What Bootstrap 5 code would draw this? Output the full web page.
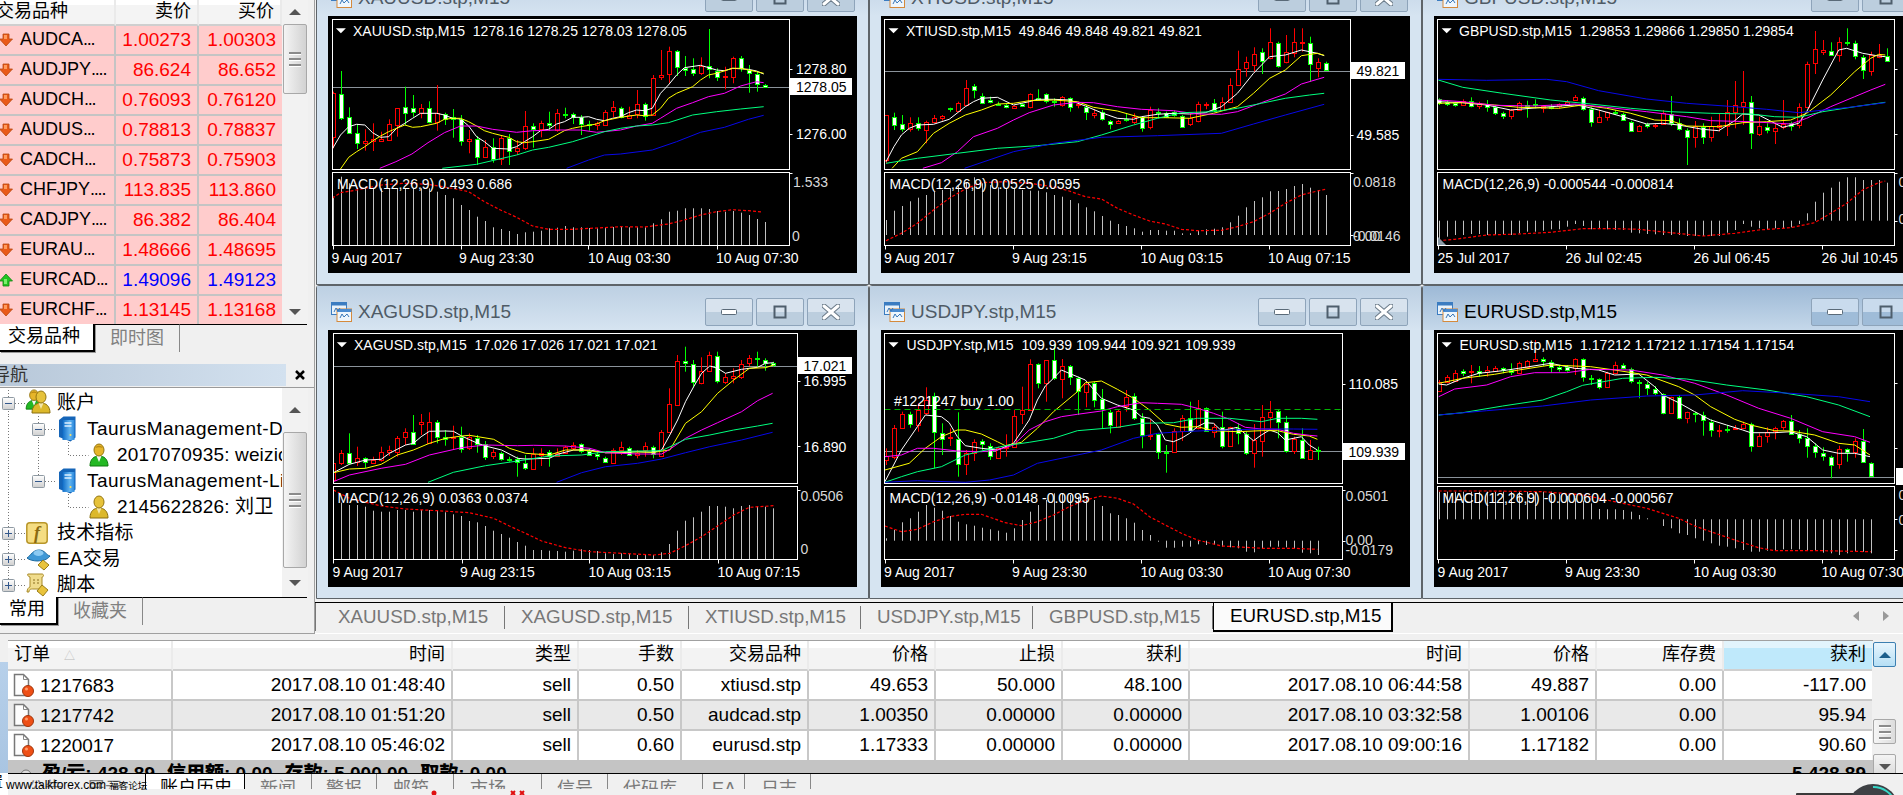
<!DOCTYPE html>
<html lang="zh">
<head>
<meta charset="utf-8">
<title>MetaTrader 4</title>
<link href="https://cdn.jsdelivr.net/npm/bootstrap@5.3.0/dist/css/bootstrap.min.css" rel="stylesheet">
<style>
html,body{margin:0;height:795px;overflow:hidden;background:#f0f0f0}
body{font-family:"Liberation Sans","Noto Sans CJK SC",sans-serif;font-size:19px;color:#000;line-height:1.2}
.shell{width:1903px;height:795px;overflow:hidden;position:relative}
.topzone{height:634px}
.leftcol{width:315px;height:634px;border-right:1px solid #a0a0a0;border-bottom:1px solid #a0a0a0;flex:none;overflow:hidden;background:#f0f0f0}
.rightcol{width:1588px;flex:none}
/* market watch */
.mw{height:324px;overflow:hidden;padding-right:7px}
.mw-tbl{width:282px;overflow:hidden;flex:none}
table.mwt{table-layout:fixed;width:282px;border-collapse:separate;border-spacing:0;margin:0}
.mwt th{height:26px;background:linear-gradient(#fff 0 20%,#f4f4f4 20% 100%);border-bottom:2px solid #cfcfcf;border-right:2px solid #eaeaea;font-weight:400;font-size:18px;text-align:right;padding:0 6px;white-space:nowrap;overflow:visible}
.mwt th:first-child{text-align:left;padding-left:0}
.mwt th:first-child span{margin-left:-4px;display:inline-block}
.mwt td{height:30px;background:#ffcccc;border-bottom:2px solid #c4c4c4;border-right:2px solid #c4c4c4;padding:0 6px 0 0;text-align:right;color:#f00;white-space:nowrap}
.mwt td.up{color:#00f}
.mwt td:first-child{text-align:left;color:#000;padding:0;font-size:18px}
.mwt td:last-child{border-right:0}
.mwt td svg{margin:0 7px 0 -1px;vertical-align:-2px}
.dts{letter-spacing:-1.2px}
/* scrollbars */
.vscroll{width:26px;flex:none;background:#f2f2f2;position:relative}
.sb-btn{height:24px}
.sb-thumb{width:24px;margin-left:1px;background:linear-gradient(90deg,#f4f4f4,#d2d2d2);border:1px solid #a8a8a8;border-radius:2px}
.tri{width:0;height:0;border-left:6px solid transparent;border-right:6px solid transparent}
.tri.u{border-bottom:6px solid #555}
.tri.d{border-top:6px solid #555}
.grip{width:12px;height:2px;background:#8b8b8b;box-shadow:0 1px 0 #fff}
/* tab rows on left */
.ltabs{height:37px;background:#f0f0f0}
.ltabs .lt{height:28px;font-size:18px;color:#808080;display:flex;align-items:center;border-top:1px solid #000}
.ltabs .lt.on{color:#000;background:#fff;border-top:0;border-right:2px solid #000;border-bottom:2px solid #000;box-shadow:1px 1px 0 #999}
.lt-fill{flex:1;border-top:1px solid #000;height:28px;margin-right:7px}
/* navigator */
.navhead{height:22px;margin-top:3px;margin-bottom:1px;display:flex;align-items:center}
.navhead .cap{width:286px;height:22px;background:linear-gradient(90deg,#b8c8d9,#d3e1ef);color:#333;font-size:18px;line-height:22px;overflow:hidden;white-space:nowrap}
.navhead .cap span{margin-left:-8px;display:inline-block}
.navbody{height:210px;padding-right:7px;border-top:1px solid #9a9a9a}
.treebox{width:282px;flex:none;background:#fff;overflow:hidden;padding-top:2px;height:209px}
.tr-row{height:26px;display:flex;align-items:center;white-space:nowrap;font-size:19px;letter-spacing:.15px}
.tr-row.tm{letter-spacing:.45px}
.tr-row svg{flex:none;overflow:visible}
/* mdi */
.mdi{height:602px;overflow:hidden;background:#f0f0f0;padding-left:1px}
.wins{display:grid;grid-template-columns:repeat(3,553px);grid-auto-rows:314px;margin-top:-29px;width:1659px}
.win{border:1px solid #5e6469;border-radius:3px 3px 0 0;background:#d6e4f1;padding:0 11px}
.win .wt{height:44px;background:linear-gradient(#bdd0e3,#d6e4f1);margin:0 -11px;padding:8px 13px 0 14px;display:flex;align-items:center;color:#4f5b66;font-size:19px;white-space:nowrap}
.win.act .wt{background:linear-gradient(#9db9d6,#c5d8ea);color:#000}
.wt .ttl{margin-left:6px}
.wb{width:48px;height:28px;border:1px solid #8ea4ba;border-radius:2px;background:linear-gradient(#d8e3ee 50%,#bccede 50%);display:flex;align-items:center;justify-content:center;margin-left:3px}
.win.act .wb{background:linear-gradient(#c9dbed 50%,#9fbcd8 50%)}
.cht{display:block;width:529px;height:257px;background:#000}
.cht text{font:14px "Liberation Sans",sans-serif;fill:#fff;white-space:pre}
.cht text.k{fill:#000}
.cht text.g{fill:#d8d8d8}
/* strip */
.strip{height:32px;background:#f0f0f0;border-top:1px solid #000;border-bottom:1px solid #fff;margin-top:0}
.st{height:28px;display:flex;align-items:center;color:#777;font-size:18.800px;white-space:nowrap;position:relative;padding-left:16px}
.st::after{content:"";position:absolute;right:0;top:3px;height:23px;border-right:1px solid #777}
.st.first{border-left:1px solid #777;padding-left:22px}
.st.on{background:#fbfbfb;color:#000;border-left:1px solid #000;border-right:2px solid #000;border-bottom:2px solid #000;height:29px}
.st.on::after{display:none}
.triL,.triR{width:0;height:0;border-top:5px solid transparent;border-bottom:5px solid transparent}
.triL{border-right:6px solid #999}
.triR{border-left:6px solid #999}
/* lower */
.lower{height:161px}
.leftedge{width:8px;flex:none;padding-top:28px;overflow:hidden}
.leftedge .blu{height:111px;background:linear-gradient(#b7d0ea,#a9c5e2)}
.leftedge .wh{height:22px;background:#fff;font-size:15px;white-space:nowrap;overflow:hidden}
.leftedge .wh span{margin-left:-12px;display:inline-block}
.orders{width:1865px;flex:none;padding-top:6px}
.ordwrap{height:139px}
.ordmain{width:1865px;flex:none;border-top:1px solid #a0a0a0}
table.ot{table-layout:fixed;width:1864px;border-collapse:separate;border-spacing:0;margin:0;background:#fff}
.ot th{height:30px;background:linear-gradient(#fff 0 25%,#f3f3f3 25% 100%);border-bottom:2px solid #d0d0d0;border-right:2px solid #ebebeb;font-size:18px;font-weight:400;text-align:right;padding:0 6px;white-space:nowrap}
.ot th.hl{background:linear-gradient(#e2f4fc 0 25%,#bfe9fb 25% 100%);border-right:0}
.ot th:first-child{text-align:left}
.ot td{height:30px;border-bottom:2px solid #c8c8c8;border-right:2px solid #c8c8c8;text-align:right;padding:0 6px;white-space:nowrap}
.ot tr:last-child td{border-bottom:0;height:29px}
.ot td:last-child{border-right:0}
.ot td:first-child{text-align:left;padding-left:5px}
.ot td svg{vertical-align:-5px;margin-right:6px}
.ot tr.alt td{background:#e9e9e9}
.sortm{color:#bbb;font-size:11px;margin-left:14px}
.sumbar{height:18px;background:#c4c4c4;overflow:hidden;font-weight:700;padding:3px 7px 0 12px;white-space:nowrap}
.sumbar svg{margin-right:10px;vertical-align:-3px;overflow:visible}
.sumbar b{margin-right:12px}
.osb{width:23px;flex:none;position:relative;padding-top:1px}
.osb .bup{height:25px;margin-top:1px;border:1px solid #3c7fb1;background:linear-gradient(#e8f5fd,#b6dff5);border-radius:2px}
.osb .bdn{height:25px;border:1px solid #a8a8a8;background:linear-gradient(#f4f4f4,#d8d8d8);border-radius:2px;margin-top:10px}
.osb .bth{height:25px;margin-top:52px;border:1px solid #a8a8a8;background:linear-gradient(90deg,#f6f6f6,#dcdcdc);border-radius:2px}
.btabs{height:16px;border-top:1px solid #000;overflow:hidden;margin-top:0;background:#f0f0f0;position:relative;margin-left:0;width:1895px}
.bt{font-size:18px;color:#7a7a7a;height:16px;padding-top:4px;line-height:22px;white-space:nowrap;position:relative;flex:none;overflow:hidden}
.bt.sepr{border-right:1px solid #888}
.bt.on{background:#fff;color:#000;border-left:1px solid #000;border-right:1px solid #000;margin-top:-1px;height:17px}
.wmark{position:absolute;left:6px;top:780px;font-size:12px;line-height:11px;color:#000;white-space:nowrap}
.wmark i{font-style:normal;font-size:9.500px}
.dial{position:absolute;left:1796px;top:782px}
</style>
</head>
<body>
<svg width="0" height="0" class="position-absolute">
<defs>
<linearGradient id="gsrv" x1="0" x2="1"><stop offset="0" stop-color="#0e6cc8"/><stop offset=".6" stop-color="#66b8f2"/><stop offset="1" stop-color="#2b8adf"/></linearGradient>
<linearGradient id="gexp" x1="0" y1="0" x2="0" y2="1"><stop offset="0" stop-color="#fff"/><stop offset="1" stop-color="#cfcfcf"/></linearGradient>
<symbol id="arD" viewBox="0 0 14 14"><path d="M4 1h6v5h3.500L7 13 .5 6H4z" fill="#ea5a18" stroke="#b8460f" stroke-width=".8"/><path d="M5 2h3v4H5z" fill="#ff9a5c"/></symbol>
<symbol id="arU" viewBox="0 0 14 14"><path d="M7 1l6.500 7H10v5H4V8H.5z" fill="#22c422" stroke="#128412" stroke-width=".8"/><path d="M5 6h3v5H5z" fill="#7bef6b"/></symbol>
<symbol id="wico" viewBox="0 0 21 20"><rect x=".5" y=".5" width="15" height="12" fill="#e8f2fb" stroke="#3b7cc1"/><rect x=".5" y=".5" width="15" height="3" fill="#3b7cc1"/><rect x="6" y="7" width="14.500" height="12.500" fill="#eef6fd" stroke="#d58a3c"/><rect x="6" y="7" width="14.500" height="3" fill="#4a8bd0"/><path d="M3 10l2-4 2 3 2-3M9 16l2-4 2 3 3-3 2 3" fill="none" stroke="#3877b8"/></symbol>
<symbol id="bmin" viewBox="0 0 18 10"><rect x="1.500" y="2.500" width="15" height="5" rx="1" fill="#fff" stroke="#5a6a78"/></symbol>
<symbol id="bmax" viewBox="0 0 14 14"><rect x="1.500" y="1.500" width="11" height="11" fill="none" stroke="#4e5e6c" stroke-width="2"/></symbol>
<symbol id="bcls" viewBox="0 0 18 16"><path d="M2 2l14 12M16 2L2 14" stroke="#6a7a88" stroke-width="5" stroke-linecap="round"/><path d="M2 2l14 12M16 2L2 14" stroke="#fff" stroke-width="3" stroke-linecap="round"/></symbol>
<symbol id="expM" viewBox="0 0 13 13"><rect x=".5" y=".5" width="12" height="12" rx="1" fill="url(#gexp)" stroke="#8f9aa3"/><path d="M3 6.500h7" stroke="#33588c"/></symbol>
<symbol id="expP" viewBox="0 0 13 13"><rect x=".5" y=".5" width="12" height="12" rx="1" fill="url(#gexp)" stroke="#8f9aa3"/><path d="M3 6.500h7M6.500 3v7" stroke="#33588c"/></symbol>
<symbol id="pG" viewBox="0 0 20 24" overflow="visible"><path d="M1 23c0-7 4-10 9-10s9 3 9 10z" fill="#23b823" stroke="#0e7a0e"/><path d="M7.500 13l2.500 6 2.500-6z" fill="#f4f4f4"/><ellipse cx="10" cy="7" rx="5" ry="6" fill="#e6b52a" stroke="#94750f"/><path d="M6 5c2-3 6-3 8 0-3-1-5-1-8 0z" fill="#b98a14"/></symbol>
<symbol id="pY" viewBox="0 0 20 24" overflow="visible"><path d="M1 23c0-7 4-10 9-10s9 3 9 10z" fill="#dcb82a" stroke="#8a6f10"/><path d="M7.500 13l2.500 6 2.500-6z" fill="#f3e6a8"/><ellipse cx="10" cy="7" rx="5" ry="6" fill="#e6c23a" stroke="#94750f"/></symbol>
<symbol id="srv" viewBox="0 0 18 26"><path d="M.5 4L5 .5h12v21L12 25.500.5 21z" fill="#1565b8"/><path d="M5 2h12v20H5z" fill="url(#gsrv)" transform="translate(-1 2)" opacity=".95"/><path d="M6 7h7M6 10h7" stroke="#dff1ff" stroke-width="1.500"/><circle cx="12" cy="19" r="1" fill="#ffe060"/></symbol>
<symbol id="fnb" viewBox="0 0 22 22"><rect x=".8" y=".8" width="20.400" height="20.400" rx="3" fill="#f5dd82" stroke="#b8962a" stroke-width="1.500"/><text x="11" y="17" font-family="Liberation Serif,serif" font-style="italic" font-weight="700" font-size="18" text-anchor="middle" fill="#8a6a10">f</text></symbol>
<symbol id="eab" viewBox="0 0 25 24"><path d="M1 11C5 8 7 3 13 3s7 5 11 6c-3 4-8 5-12 5S3 13 1 11z" fill="#3f98d6" stroke="#1e6a9e"/><ellipse cx="12.500" cy="6" rx="5" ry="3" fill="#8ccaf2"/><path d="M12 14h5l-1 3z" fill="#d8d8d8"/><path d="M17 13l6 5-5 5-6-5z" fill="#e9c33c" stroke="#9a7d18"/></symbol>
<symbol id="scr" viewBox="0 0 25 24"><path d="M2 1h14c2 0 2 3 0 3v12H7c-2 0-4 0-4 3H1c0-3 2-5 3-5V4C2 4 1 1 2 1z" fill="#f0dc8c" stroke="#a88a28"/><path d="M7 7h2M11 7h2M7 10h2M11 10h2" stroke="#8a6f20"/><path d="M16 12l6 5-5 6-6-5z" fill="#e9c33c" stroke="#9a7d18"/></symbol>
<symbol id="ordi" viewBox="0 0 21 24" overflow="visible"><path d="M1.500 1.500h9l5 5v16h-14z" fill="#fdfdfd" stroke="#777" stroke-width="1.500"/><path d="M10.500 1.500v5h5" fill="none" stroke="#888"/><circle cx="15" cy="18" r="5.500" fill="#ee4f16" stroke="#a0360c"/><circle cx="13.500" cy="16" r="1.500" fill="#ff9d6a"/></symbol>
</defs>
</svg>

<div class="shell d-flex flex-column">
<div class="d-flex topzone">
  <div class="leftcol d-flex flex-column">
    <div class="mw d-flex">
      <div class="mw-tbl">
        <table class="mwt">
          <colgroup><col style="width:116px"><col style="width:83px"><col style="width:83px"></colgroup>
          <thead><tr><th><span>交易品种</span></th><th>卖价</th><th>买价</th></tr></thead>
          <tbody>
          <tr><td><svg width="14" height="14"><use href="#arD"/></svg>AUDCA<span class="dts">...</span></td><td>1.00273</td><td>1.00303</td></tr>
          <tr><td><svg width="14" height="14"><use href="#arD"/></svg>AUDJPY<span class="dts">....</span></td><td>86.624</td><td>86.652</td></tr>
          <tr><td><svg width="14" height="14"><use href="#arD"/></svg>AUDCH<span class="dts">...</span></td><td>0.76093</td><td>0.76120</td></tr>
          <tr><td><svg width="14" height="14"><use href="#arD"/></svg>AUDUS<span class="dts">...</span></td><td>0.78813</td><td>0.78837</td></tr>
          <tr><td><svg width="14" height="14"><use href="#arD"/></svg>CADCH<span class="dts">...</span></td><td>0.75873</td><td>0.75903</td></tr>
          <tr><td><svg width="14" height="14"><use href="#arD"/></svg>CHFJPY<span class="dts">....</span></td><td>113.835</td><td>113.860</td></tr>
          <tr><td><svg width="14" height="14"><use href="#arD"/></svg>CADJPY<span class="dts">....</span></td><td>86.382</td><td>86.404</td></tr>
          <tr><td><svg width="14" height="14"><use href="#arD"/></svg>EURAU<span class="dts">...</span></td><td>1.48666</td><td>1.48695</td></tr>
          <tr><td><svg width="14" height="14"><use href="#arU"/></svg>EURCAD<span class="dts">...</span></td><td class="up">1.49096</td><td class="up">1.49123</td></tr>
          <tr><td><svg width="14" height="14"><use href="#arD"/></svg>EURCHF<span class="dts">...</span></td><td>1.13145</td><td>1.13168</td></tr>
          </tbody>
        </table>
      </div>
      <div class="vscroll d-flex flex-column">
        <div class="sb-btn d-flex align-items-center justify-content-center"><div class="tri u"></div></div>
        <div class="sb-thumb d-flex flex-column align-items-center justify-content-center gap-1" style="height:70px"><div class="grip"></div><div class="grip"></div><div class="grip"></div></div>
        <div class="flex-grow-1"></div>
        <div class="sb-btn d-flex align-items-center justify-content-center"><div class="tri d"></div></div>
      </div>
    </div>
    <div class="ltabs d-flex">
      <div class="lt on" style="width:95px;padding-left:8px">交易品种</div>
      <div class="lt" style="width:85px;padding-left:15px;border-right:1px solid #888">即时图</div>
      <div class="lt-fill"></div>
    </div>
    <div class="navhead"><div class="cap"><span>导航</span></div><div class="flex-grow-1 d-flex justify-content-center"><svg width="10" height="10" viewBox="0 0 10 10"><path d="M1 1l8 8M9 1l-8 8" stroke="#000" stroke-width="2.500"/></svg></div></div>
    <div class="navbody d-flex">
      <div class="treebox">
        <div class="tr-row"><svg width="57" height="26"><g fill="none" stroke="#777" stroke-dasharray="1 2"><path d="M8.500 0v26M15 13.500h10"/></g><use href="#expM" x="2" y="7" width="13" height="13"/><use href="#pG" x="25" y="-1" width="18" height="21"/><use href="#pY" x="31" y="0" width="20" height="24"/></svg>账户</div>
        <div class="tr-row tm"><svg width="87" height="26"><g fill="none" stroke="#777" stroke-dasharray="1 2"><path d="M8.500 0v26M38.500 0v26M45 13.500h11"/></g><use href="#expM" x="32" y="7" width="13" height="13"/><use href="#srv" x="58" y="0" width="19" height="26"/></svg>TaurusManagement-D</div>
        <div class="tr-row"><svg width="117" height="26"><g fill="none" stroke="#777" stroke-dasharray="1 2"><path d="M8.500 0v26M38.500 0v26M68.500 0v13.500h20"/></g><use href="#pG" x="89" y="1" width="20" height="24"/></svg>2017070935: weizic</div>
        <div class="tr-row tm"><svg width="87" height="26"><g fill="none" stroke="#777" stroke-dasharray="1 2"><path d="M8.500 0v26M38.500 0v13M45 13.500h11"/></g><use href="#expM" x="32" y="7" width="13" height="13"/><use href="#srv" x="58" y="0" width="19" height="26"/></svg>TaurusManagement-Li</div>
        <div class="tr-row"><svg width="117" height="26"><g fill="none" stroke="#777" stroke-dasharray="1 2"><path d="M8.500 0v26M68.500 0v13.500h20"/></g><use href="#pY" x="89" y="1" width="20" height="24"/></svg>2145622826: 刘卫</div>
        <div class="tr-row"><svg width="57" height="26"><g fill="none" stroke="#777" stroke-dasharray="1 2"><path d="M8.500 0v26M15 13.500h10"/></g><use href="#expP" x="2" y="7" width="13" height="13"/><use href="#fnb" x="26" y="2" width="22" height="22"/></svg>技术指标</div>
        <div class="tr-row"><svg width="57" height="26"><g fill="none" stroke="#777" stroke-dasharray="1 2"><path d="M8.500 0v26M15 13.500h10"/></g><use href="#expP" x="2" y="7" width="13" height="13"/><use href="#eab" x="26" y="1" width="25" height="24"/></svg>EA交易</div>
        <div class="tr-row"><svg width="57" height="26"><g fill="none" stroke="#777" stroke-dasharray="1 2"><path d="M8.500 0v13M15 13.500h10"/></g><use href="#expP" x="2" y="7" width="13" height="13"/><use href="#scr" x="26" y="1" width="25" height="24"/></svg>脚本</div>
      </div>
      <div class="vscroll d-flex flex-column">
        <div class="sb-btn d-flex align-items-center justify-content-center" style="height:44px"><div class="tri u"></div></div>
        <div class="sb-thumb d-flex flex-column align-items-center justify-content-center gap-1" style="height:136px"><div class="grip"></div><div class="grip"></div><div class="grip"></div></div>
        <div class="flex-grow-1 d-flex align-items-center justify-content-center"><div class="tri d"></div></div>
      </div>
    </div>
    <div class="ltabs d-flex" style="height:32px">
      <div class="lt on" style="width:58px;padding-left:9px">常用</div>
      <div class="lt" style="width:85px;padding-left:15px;border-right:1px solid #888">收藏夹</div>
      <div class="lt-fill"></div>
    </div>
  </div>

  <div class="rightcol">
    <div class="mdi">
      <div class="wins">
        <div class="win"><div class="wt"><svg width="21" height="20"><use href="#wico"/></svg><span class="ttl">XAUUSD.stp,M15</span><span class="ms-auto"></span><span class="wb"><svg width="18" height="10"><use href="#bmin"/></svg></span><span class="wb"><svg width="14" height="14"><use href="#bmax"/></svg></span><span class="wb"><svg width="18" height="16"><use href="#bcls"/></svg></span></div>
          <svg class="cht" id="c1"><g class="mk"></g>
            <text x="25" y="20">XAUUSD.stp,M15  1278.16 1278.25 1278.03 1278.05</text>
            <text x="468" y="58">1278.80</text><text x="468" y="123">1276.00</text>
            <rect x="462" y="62" width="62" height="17" fill="#fff"/><text class="k" x="468" y="75.500">1278.05</text>
            <text class="g" x="465" y="170.500">1.533</text><text class="g" x="464" y="224.500">0</text>
            <text x="9" y="173">MACD(12,26,9) 0.493 0.686</text>
            <text x="3.500" y="246.500">9 Aug 2017</text><text x="131" y="246.500">9 Aug 23:30</text><text x="260" y="246.500">10 Aug 03:30</text><text x="388" y="246.500">10 Aug 07:30</text>
          </svg></div>
        <div class="win"><div class="wt"><svg width="21" height="20"><use href="#wico"/></svg><span class="ttl">XTIUSD.stp,M15</span><span class="ms-auto"></span><span class="wb"><svg width="18" height="10"><use href="#bmin"/></svg></span><span class="wb"><svg width="14" height="14"><use href="#bmax"/></svg></span><span class="wb"><svg width="18" height="16"><use href="#bcls"/></svg></span></div>
          <svg class="cht" id="c2"><g class="mk"></g>
            <text x="25" y="20">XTIUSD.stp,M15  49.846 49.848 49.821 49.821</text>
            <rect x="470" y="46" width="54" height="17" fill="#fff"/><text class="k" x="475.500" y="59.500">49.821</text>
            <text x="475.500" y="123.500">49.585</text>
            <text class="g" x="472" y="170.500">0.0818</text><text class="g" x="472" y="224.500">0.00</text><text class="g" x="472" y="224.500">-0.0146</text>
            <text x="8.500" y="173">MACD(12,26,9) 0.0525 0.0595</text>
            <text x="3" y="246.500">9 Aug 2017</text><text x="131" y="246.500">9 Aug 23:15</text><text x="259.500" y="246.500">10 Aug 03:15</text><text x="387" y="246.500">10 Aug 07:15</text>
          </svg></div>
        <div class="win"><div class="wt"><svg width="21" height="20"><use href="#wico"/></svg><span class="ttl">GBPUSD.stp,M15</span><span class="ms-auto"></span><span class="wb"><svg width="18" height="10"><use href="#bmin"/></svg></span><span class="wb"><svg width="14" height="14"><use href="#bmax"/></svg></span><span class="wb"><svg width="18" height="16"><use href="#bcls"/></svg></span></div>
          <svg class="cht" id="c3"><g class="mk"></g>
            <text x="25" y="20">GBPUSD.stp,M15  1.29853 1.29866 1.29850 1.29854</text>
            <text class="g" x="464.500" y="170.500">0</text><text class="g" x="464.500" y="208">0</text>
            <text x="8.500" y="173">MACD(12,26,9) -0.000544 -0.000814</text>
            <text x="3.500" y="246.500">25 Jul 2017</text><text x="131.500" y="246.500">26 Jul 02:45</text><text x="259.500" y="246.500">26 Jul 06:45</text><text x="387.500" y="246.500">26 Jul 10:45</text>
          </svg></div>
        <div class="win"><div class="wt"><svg width="21" height="20"><use href="#wico"/></svg><span class="ttl">XAGUSD.stp,M15</span><span class="ms-auto"></span><span class="wb"><svg width="18" height="10"><use href="#bmin"/></svg></span><span class="wb"><svg width="14" height="14"><use href="#bmax"/></svg></span><span class="wb"><svg width="18" height="16"><use href="#bcls"/></svg></span></div>
          <svg class="cht" id="c4"><g class="mk"></g>
            <text x="26" y="19.500">XAGUSD.stp,M15  17.026 17.026 17.021 17.021</text>
            <rect x="469.500" y="27" width="54.500" height="17" fill="#fff"/><text class="k" x="475.500" y="40.500">17.021</text>
            <text x="475.500" y="56">16.995</text><text x="475.500" y="121.500">16.890</text>
            <text class="g" x="472.500" y="170.500">0.0506</text><text class="g" x="472.500" y="224">0</text>
            <text x="9.500" y="172.500">MACD(12,26,9) 0.0363 0.0374</text>
            <text x="4.500" y="246.500">9 Aug 2017</text><text x="132" y="246.500">9 Aug 23:15</text><text x="260.500" y="246.500">10 Aug 03:15</text><text x="389.500" y="246.500">10 Aug 07:15</text>
          </svg></div>
        <div class="win"><div class="wt"><svg width="21" height="20"><use href="#wico"/></svg><span class="ttl">USDJPY.stp,M15</span><span class="ms-auto"></span><span class="wb"><svg width="18" height="10"><use href="#bmin"/></svg></span><span class="wb"><svg width="14" height="14"><use href="#bmax"/></svg></span><span class="wb"><svg width="18" height="16"><use href="#bcls"/></svg></span></div>
          <svg class="cht" id="c5"><g class="mk"></g>
            <text x="25.500" y="19.500">USDJPY.stp,M15  109.939 109.944 109.921 109.939</text>
            <text x="13" y="76">#1221247 buy 1.00</text>
            <text x="467.500" y="59">110.085</text>
            <rect x="462" y="113" width="62" height="17" fill="#fff"/><text class="k" x="467.500" y="126.500">109.939</text>
            <text class="g" x="464.500" y="170.500">0.0501</text><text class="g" x="464.500" y="215">0.00</text><text class="g" x="464.500" y="224.500">-0.0179</text>
            <text x="8.500" y="172.500">MACD(12,26,9) -0.0148 -0.0095</text>
            <text x="3" y="246.500">9 Aug 2017</text><text x="131" y="246.500">9 Aug 23:30</text><text x="259.500" y="246.500">10 Aug 03:30</text><text x="387" y="246.500">10 Aug 07:30</text>
          </svg></div>
        <div class="win act"><div class="wt"><svg width="21" height="20"><use href="#wico"/></svg><span class="ttl">EURUSD.stp,M15</span><span class="ms-auto"></span><span class="wb"><svg width="18" height="10"><use href="#bmin"/></svg></span><span class="wb"><svg width="14" height="14"><use href="#bmax"/></svg></span><span class="wb"><svg width="18" height="16"><use href="#bcls"/></svg></span></div>
          <svg class="cht" id="c6"><g class="mk"></g>
            <text x="25.500" y="19.500">EURUSD.stp,M15  1.17212 1.17212 1.17154 1.17154</text>
            <rect x="462" y="138" width="62" height="17" fill="#fff"/>
            <text class="g" x="464.500" y="170">0</text><text class="g" x="464.500" y="194.500">0</text>
            <text x="8.500" y="172.500">MACD(12,26,9) -0.000604 -0.000567</text>
            <text x="3.500" y="246.500">9 Aug 2017</text><text x="131" y="246.500">9 Aug 23:30</text><text x="259.500" y="246.500">10 Aug 03:30</text><text x="387.500" y="246.500">10 Aug 07:30</text>
          </svg></div>
      </div>
    </div>
    <div class="strip d-flex">
      <div class="st first" style="width:190px">XAUUSD.stp,M15</div>
      <div class="st" style="width:184px">XAGUSD.stp,M15</div>
      <div class="st" style="width:172px">XTIUSD.stp,M15</div>
      <div class="st" style="width:172px">USDJPY.stp,M15</div>
      <div class="st" style="width:180px">GBPUSD.stp,M15</div>
      <div class="st on" style="width:180px">EURUSD.stp,M15</div>
      <div class="d-flex align-items-center gap-4 ms-auto" style="height:26px;padding-right:14px"><div class="triL"></div><div class="triR"></div></div>
    </div>
  </div>
</div>

<div class="lower d-flex">
  <div class="leftedge"><div class="blu"></div><div class="wh"><span>置</span></div></div>
  <div class="d-flex flex-column">
    <div class="orders d-flex ordwrap" style="height:139px;width:1888px">
      <div class="ordmain">
        <table class="ot">
          <colgroup><col style="width:165px"><col style="width:280px"><col style="width:126px"><col style="width:103px"><col style="width:127px"><col style="width:127px"><col style="width:127px"><col style="width:127px"><col style="width:280px"><col style="width:127px"><col style="width:127px"><col style="width:148px"></colgroup>
          <thead><tr><th>订单<span class="sortm">△</span></th><th>时间</th><th>类型</th><th>手数</th><th>交易品种</th><th>价格</th><th>止损</th><th>获利</th><th>时间</th><th>价格</th><th>库存费</th><th class="hl">获利</th></tr></thead>
          <tbody>
            <tr><td><svg width="21" height="24"><use href="#ordi"/></svg>1217683</td><td>2017.08.10 01:48:40</td><td>sell</td><td>0.50</td><td>xtiusd.stp</td><td>49.653</td><td>50.000</td><td>48.100</td><td>2017.08.10 06:44:58</td><td>49.887</td><td>0.00</td><td>-117.00</td></tr>
            <tr class="alt"><td><svg width="21" height="24"><use href="#ordi"/></svg>1217742</td><td>2017.08.10 01:51:20</td><td>sell</td><td>0.50</td><td>audcad.stp</td><td>1.00350</td><td>0.00000</td><td>0.00000</td><td>2017.08.10 03:32:58</td><td>1.00106</td><td>0.00</td><td>95.94</td></tr>
            <tr><td><svg width="21" height="24"><use href="#ordi"/></svg>1220017</td><td>2017.08.10 05:46:02</td><td>sell</td><td>0.60</td><td>eurusd.stp</td><td>1.17333</td><td>0.00000</td><td>0.00000</td><td>2017.08.10 09:00:16</td><td>1.17182</td><td>0.00</td><td>90.60</td></tr>
          </tbody>
        </table>
        <div class="sumbar d-flex"><svg width="12" height="16" viewBox="0 0 12 16"><circle cx="6" cy="12" r="5" fill="#dcdcdc" stroke="#777"/></svg><b>盈/亏: 428.89</b><b>信用额: 0.00</b><b>存款: 5,000.00</b><b>取款: 0.00</b><span class="ms-auto">5,428.89</span></div>
      </div>
      <div class="osb">
        <div class="bup d-flex align-items-center justify-content-center"><div class="tri u" style="border-bottom-color:#1d5f8c"></div></div>
        <div class="bth d-flex flex-column align-items-center justify-content-center gap-1"><div class="grip"></div><div class="grip"></div><div class="grip"></div></div>
        <div class="bdn d-flex align-items-center justify-content-center"><div class="tri d"></div></div>
      </div>
    </div>
    <div class="btabs d-flex">
      <div class="bt" style="width:137px;padding-left:19px">公告<span class="ms-4">展示</span></div>
      <div class="bt on" style="width:100px;padding-left:14px">账户历史</div>
      <div class="bt sepr" style="width:67px;padding-left:15px">新闻</div>
      <div class="bt sepr" style="width:65px;padding-left:14px">警报</div>
      <div class="bt sepr" style="width:77px;padding-left:16px">邮箱</div>
      <div class="bt sepr" style="width:88px;padding-left:16px">市场</div>
      <div class="bt sepr" style="width:66px;padding-left:15px">信号</div>
      <div class="bt sepr" style="width:95px;padding-left:15px">代码库</div>
      <div class="bt sepr" style="width:42px;padding-left:9px">EA</div>
      <div class="bt sepr" style="width:66px;padding-left:16px">日志</div>
    </div>
  </div>
</div>

<div class="wmark">www.talkforex.com <i>福客论坛</i></div>
<svg class="position-absolute" style="left:431px;top:790px" width="100" height="5"><circle cx="3" cy="3" r="2.500" fill="#e01010"/><path d="M80 1l4 4M84 1l-4 4M89 1l4 4M93 1l-4 4" stroke="#e01010" stroke-width="2"/></svg>
<svg class="dial" width="107" height="13"><rect x="0" y="11" width="80" height="3" rx="1" fill="#3a3a3a"/><circle cx="77" cy="28" r="26" fill="#3e4044"/><path d="M77 5a23 23 0 0 1 22 15" fill="none" stroke="#38d8c8" stroke-width="2"/></svg>
</div>

<script>
function chart(o){
  var X=function(z){return (z-o.zx0)/o.sx},Y=function(z){return (z-o.zy0)/3},n=function(v){return v.toFixed(1)};
  var h=[],F=o.frame;
  var cid=o.id+'cp',mid=o.id+'mp';
  var fl=Math.round(X(F[0]))+.5,fr=Math.round(X(F[1]))+.5,ft=Math.round(Y(F[2]))+.5,fb=Math.round(Y(F[3]))+.5,mt=Math.round(Y(F[4]))+.5,mb=Math.round(Y(F[5]))+.5;
  h.push('<defs><clipPath id="'+cid+'"><rect x="'+fl+'" y="'+ft+'" width="'+(fr-fl)+'" height="'+(fb-ft)+'"/></clipPath><clipPath id="'+mid+'"><rect x="'+fl+'" y="'+mt+'" width="'+(fr-fl)+'" height="'+(mb-mt)+'"/></clipPath></defs>');
  var cx=function(i){return Math.round(X(o.x0+i*o.pitch))+.5};
  h.push('<g clip-path="url(#'+cid+')">');
  if(o.price)h.push('<path d="M'+fl+' '+(Math.round(Y(o.price))+.5)+'H'+fr+'" stroke="#8a929a"/>');
  o.c.trim().split(/\s+/).forEach(function(s,i){
    var g=s[0]=='g',a=s.slice(1).split(',').map(Number),x=cx(i),col=g?'#0f0':'#f00';
    var t=Math.round(Y(a[1]))+.5,b=Math.round(Y(a[2]))+.5;
    h.push('<path d="M'+x+' '+n(Y(a[0]))+'V'+n(Y(a[3]))+'" stroke="'+col+'"/>');
    h.push('<rect x="'+(x-2)+'" y="'+t+'" width="4" height="'+Math.max(b-t,1)+'" fill="'+(g?'#fff':'#000')+'" stroke="'+col+'"/>');
  });
  [['w','#fff'],['y','#ff0'],['m','#f0f'],['s','#00ff7f'],['b','#0808e8']].forEach(function(l){
    var pts=o[l[0]].trim().split(/\s+/).map(function(p){var a=p.split(',');return n(X(+a[0]))+','+n(Y(+a[1]))}).join(' ');
    h.push('<polyline points="'+pts+'" fill="none" stroke="'+l[1]+'"/>');
  });
  if(o.order)h.push('<path d="M'+fl+' '+(Math.round(Y(o.order))+.5)+'H'+fr+'" stroke="#00b400" stroke-dasharray="6 4"/>');
  h.push('</g><g clip-path="url(#'+mid+')">');
  o.bars.forEach(function(v,i){var x=cx(i);h.push('<path d="M'+x+' '+n(Y(o.zero))+'V'+n(Y(v))+'" stroke="#c0c0c0"/>')});
  var sp=o.sig.trim().split(/\s+/).map(function(p){var a=p.split(',');return n(X(+a[0]))+','+n(Y(+a[1]))}).join(' ');
  h.push('<polyline points="'+sp+'" fill="none" stroke="#f00" stroke-width="1.2" stroke-dasharray="3 2"/>');
  if(o.tri)h.push('<polygon points="'+fl+','+n(mb-9)+' '+(fl+9)+','+mb+' '+fl+','+mb+'" fill="#8a9aa6"/>');
  h.push('</g>');
  h.push('<rect x="'+fl+'" y="'+ft+'" width="'+(fr-fl)+'" height="'+(fb-ft)+'" fill="none" stroke="#fff"/>');
  h.push('<rect x="'+fl+'" y="'+mt+'" width="'+(fr-fl)+'" height="'+(mb-mt)+'" fill="none" stroke="#fff"/>');
  o.dt.forEach(function(z){var x=Math.round(X(z))+.5;h.push('<path d="M'+x+' '+mb+'v4" stroke="#fff"/>')});
  o.rt.forEach(function(z){var y=Math.round(Y(z))+.5;h.push('<path d="M'+fr+' '+y+'h3" stroke="#fff"/>')});
  h.push('<polygon points="'+n(X(o.tx))+','+n(Y(o.zy0+37))+' '+n(X(o.tx)+10)+','+n(Y(o.zy0+37))+' '+n(X(o.tx)+5)+','+n(Y(o.zy0+52))+'" fill="#fff"/>');
  document.querySelector('#'+o.id+' .mk').innerHTML=h.join('');
}
chart({id:'c1',zx0:50,sx:2.8,zy0:48,x0:63,pitch:22.4,tx:72,price:260,frame:[60,1340,58,508,515,735],zero:735,dt:[63,421,779,1138],rt:[208,403,518],
c:"r275,280,410,445 g213,283,353,360 g322,352,398,402 g372,398,428,447 r388,422,428,452 r370,418,424,453 r395,418,424,424 r358,373,420,422 r325,325,375,410 g260,322,340,375 g285,323,337,350 r312,325,338,355 g304,325,367,370 r255,340,365,392 g338,343,358,375 g327,352,358,413 g345,358,423,437 r390,418,424,460 g408,418,472,495 r420,440,472,472 g415,440,478,488 r405,415,478,495 g402,415,452,495 r420,445,452,465 r333,377,445,450 g370,377,388,443 r362,370,388,412 g335,368,376,392 r327,340,390,395 g323,341,343,355 g338,343,350,372 g345,350,372,405 g362,372,375,392 r365,370,375,390 r330,335,375,378 r303,320,333,352 g320,323,352,355 r320,345,355,357 r270,313,342,355 g308,311,348,362 r225,233,345,348 r150,224,232,240 r140,153,222,250 g150,152,202,228 g168,203,210,228 g175,208,218,228 r172,197,218,225 g87,197,208,235 g205,212,230,243 r200,228,230,268 r170,175,232,250 g168,175,203,215 g195,210,220,278 g215,222,253,275 g252,254,260,262",
w:"62,447 85,405 108,380 130,373 153,375 175,398 197,412 220,410 242,385 265,370 287,355 309,340 354,340 376,345 399,355 421,357 444,378 466,410 488,425 511,445 556,447 578,440 600,425 623,410 645,392 668,388 690,372 712,365 735,352 757,352 780,350 802,358 824,362 847,355 869,350 891,338 914,330 936,332 958,325 981,280 1003,255 1026,225 1048,203 1093,196 1138,210 1160,212 1183,205 1227,208 1250,213 1270,222",
y:"85,507 108,472 130,455 153,440 175,423 197,408 220,395 242,385 265,375 287,382 309,380 354,370 376,358 399,355 421,355 444,365 466,378 488,392 511,400 556,412 578,425 600,428 623,425 668,418 690,405 712,392 735,385 757,380 802,372 824,362 869,352 914,345 936,347 958,345 981,325 1003,295 1026,280 1071,260 1093,240 1115,225 1138,220 1183,205 1205,205 1250,215 1270,220",
m:"195,505 240,485 285,462 330,428 376,398 421,378 466,378 511,388 578,397 623,392 690,390 757,390 802,397 869,390 914,378 958,370 981,355 1026,325 1071,308 1115,290 1160,280 1205,258 1250,245 1270,248",
s:"370,505 466,493 578,465 623,450 668,442 735,425 780,410 824,395 869,385 914,378 958,375 1003,368 1071,345 1138,335 1205,327 1270,320",
b:"718,505 780,480 824,465 869,462 958,450 1026,425 1093,397 1160,382 1227,358 1270,346",
bars:[590,530,550,565,560,565,565,565,565,565,565,565,565,575,585,595,615,630,650,663,682,687,693,702,697,695,692,685,683,678,682,682,684,685,683,681,680,682,682,682,670,658,635,632,625,625,625,627,633,635,633,638,645,657,666],
sig:"62,595 85,578 130,570 200,555 265,550 330,553 399,565 444,575 488,605 533,630 578,652 623,678 668,688 735,688 802,684 869,680 936,681 1003,672 1048,660 1093,645 1138,635 1183,629 1227,632 1265,636"});

chart({id:'c2',zx0:31,sx:2.8,zy0:48,x0:45,pitch:22.4,tx:52,price:212,frame:[40,1343,58,508,515,735],zero:705,dt:[43,401,760,1118],rt:[405,518,705],
c:"r345,345,480,490 g338,350,375,390 g345,373,388,395 r352,368,388,395 g352,368,385,392 r362,365,390,430 r345,355,367,370 r345,349,355,362 g323,325,327,335 r305,310,332,335 r240,263,315,317 g252,257,270,295 g280,287,310,312 g290,300,307,310 g305,311,316,318 g310,315,320,325 r316,318,323,324 g310,313,317,320 r280,281,320,325 g268,295,297,300 g280,282,302,310 g295,303,307,320 r288,290,316,320 g292,295,320,335 r305,312,316,325 g315,322,337,360 r328,338,346,355 g330,335,358,362 g360,362,373,388 r360,362,370,372 g340,358,360,365 r340,352,366,372 g350,352,385,395 r320,330,382,388 g325,335,337,355 g335,340,352,354 g332,335,346,350 g345,347,380,382 r342,355,373,378 r305,313,363,367 r307,312,316,328 g297,308,330,335 r292,305,330,330 r235,255,305,305 r152,208,255,257 r170,187,205,230 r142,163,195,215 g145,157,182,222 r85,127,175,178 g125,130,197,203 r105,157,185,190 r85,127,158,172 r85,125,130,155 g110,130,193,245 r175,185,203,232 g185,190,210,212",
w:"45,485 67,440 88,405 110,385 133,375 178,373 222,358 267,320 290,305 312,295 357,292 402,315 446,305 469,298 514,298 558,300 603,318 648,338 693,355 738,358 760,350 805,343 850,340 895,342 939,338 984,320 1029,280 1074,220 1119,170 1163,165 1208,150 1253,160 1272,167",
y:"62,505 88,475 133,455 178,400 222,370 267,345 312,330 357,312 402,310 446,302 514,300 581,305 626,322 693,333 760,353 827,353 895,355 962,340 1029,320 1074,280 1119,235 1163,210 1208,167 1253,160 1272,166",
m:"148,505 200,488 245,455 290,410 357,385 402,360 446,338 514,315 581,307 626,308 693,320 760,328 850,332 917,342 984,343 1029,335 1096,308 1163,282 1208,252 1272,232",
s:"45,490 133,475 245,460 357,445 469,437 581,425 648,405 738,375 805,355 872,338 962,335 1029,325 1096,310 1163,295 1231,285 1272,280",
b:"265,505 402,455 514,430 648,412 805,407 984,400 1074,372 1163,345 1272,313",
bars:[660,632,618,604,593,585,575,570,565,558,548,532,550,555,562,565,565,570,572,572,577,585,590,600,610,622,634,648,662,672,678,685,695,690,690,692,692,700,700,692,688,686,682,667,647,622,603,592,574,573,567,558,552,563,570,585],
sig:"45,722 88,700 133,670 178,630 222,595 267,567 312,548 379,545 446,550 514,560 558,573 603,590 648,597 693,625 738,645 783,663 827,672 872,688 917,692 984,691 1029,680 1074,665 1119,640 1163,610 1208,585 1253,573 1275,568"});

chart({id:'c3',zx0:42,sx:3,zy0:48,x0:56,pitch:24,tx:65,frame:[52,1423,58,508,515,735],zero:662,tri:1,dt:[55,439,823,1207],rt:[208,403,518,662],
c:"g295,298,310,315 g300,305,312,318 g305,308,316,320 r298,302,316,318 g292,302,318,322 r305,310,318,327 g300,313,320,335 g318,322,340,345 g335,340,347,357 r328,331,347,358 r305,310,330,333 g302,314,316,353 g298,313,315,325 r315,318,323,338 g312,320,322,328 r310,313,318,325 r300,305,315,318 r285,292,300,303 g290,293,328,332 g322,328,365,380 r330,350,365,365 r335,337,350,362 g330,335,340,345 g338,342,360,362 g362,365,392,392 r375,377,392,395 g368,372,378,385 r370,374,375,385 r330,340,373,375 g288,342,368,378 g355,370,387,392 g385,390,412,495 r363,378,412,443 g370,380,412,432 r350,378,412,425 r340,375,380,395 r300,335,378,408 r243,315,335,385 r213,305,318,375 g288,305,400,447 r350,377,402,408 g370,380,390,400 r368,383,392,432 r300,372,382,388 g365,370,378,392 r310,322,375,385 r185,193,320,325 r93,148,188,222 r120,150,155,165 g127,152,165,168 r112,127,165,185 g85,127,128,137 g122,128,168,178 g165,170,210,237 r155,165,212,227 r132,165,172,175 g145,168,183,185",
w:"55,305 128,308 200,315 272,330 368,322 464,315 488,318 536,330 608,350 680,372 728,370 776,375 848,388 896,392 944,362 968,342 1016,345 1088,382 1136,370 1160,335 1208,240 1256,150 1280,145 1328,160 1376,168 1396,170",
y:"55,310 128,308 224,315 296,322 416,325 488,315 560,325 632,340 704,360 752,362 800,378 896,380 968,368 1040,365 1112,360 1160,340 1232,285 1304,215 1352,175 1376,163 1396,165",
m:"55,300 128,305 224,316 344,318 464,312 560,322 680,335 800,350 872,362 992,365 1112,372 1160,355 1232,320 1304,290 1352,270 1396,253",
s:"55,240 128,262 248,280 392,300 512,312 632,325 752,335 872,340 992,342 1064,350 1136,352 1208,335 1304,320 1396,307",
b:"55,238 200,241 380,238 440,245 536,272 680,297 800,310 944,320 1040,328 1136,338 1232,328 1304,320 1396,308",
bars:[735,710,705,705,702,702,705,705,705,705,700,695,695,692,688,688,680,672,678,688,687,688,690,690,698,700,702,703,705,705,705,708,708,708,708,708,698,690,672,680,685,688,685,685,682,672,640,605,578,563,545,532,532,540,540,540,548],
sig:"55,722 104,718 200,705 296,702 392,697 488,686 584,686 656,688 752,698 848,708 944,700 1016,690 1112,683 1184,668 1232,640 1280,610 1328,570 1376,548 1396,543"});

chart({id:'c4',zx0:50,sx:2.8,zy0:150,x0:65,pitch:22.4,tx:75,price:257,frame:[63,1363,160,610,617,838],zero:838,dt:[65,424,782,1141],rt:[303,498,630],
c:"r545,548,600,610 r510,518,548,555 g460,518,550,555 r500,533,545,558 g532,534,547,565 r530,540,550,552 r500,515,540,545 r497,511,516,528 r468,473,515,530 r445,455,472,495 g405,455,492,495 r402,425,431,465 r397,425,490,492 g420,425,472,490 g450,472,478,497 r437,470,474,510 g440,470,508,518 r460,472,505,510 g465,475,492,518 g483,492,530,540 r508,515,527,537 g515,518,536,542 g530,536,538,545 g530,538,547,590 g525,548,565,570 r505,523,566,566 r505,518,524,558 g510,516,528,560 r505,518,528,530 r497,501,518,522 r487,495,503,510 g490,492,512,520 g505,512,524,528 g515,522,528,540 g530,533,547,548 r505,510,548,548 r485,500,510,525 g500,505,525,528 r510,518,524,535 r487,497,510,530 g497,500,522,535 r450,455,527,527 r325,372,455,455 r225,243,375,377 g200,243,250,275 g240,252,306,322 r232,272,310,313 r215,226,272,272 g215,227,302,310 r280,292,305,312 r265,287,295,310 r240,252,290,297 r225,235,248,258 g215,233,238,260 g235,240,248,272 g245,248,256,260",
w:"65,578 110,553 155,540 199,538 222,520 267,495 289,490 311,470 334,454 379,453 401,454 424,468 469,490 491,498 536,510 581,535 603,537 670,535 693,523 738,510 783,510 827,518 872,518 917,515 962,517 984,510 1007,465 1029,420 1051,365 1074,320 1096,280 1119,258 1141,265 1163,280 1208,268 1253,262 1275,250 1298,248",
y:"65,578 110,567 155,565 199,553 244,525 289,510 334,490 379,475 424,468 446,466 514,478 558,505 603,520 670,525 715,510 760,510 827,518 895,515 962,517 1007,510 1051,430 1096,395 1141,340 1186,300 1230,265 1275,263 1298,255",
m:"65,605 110,585 199,565 267,553 334,525 424,503 491,495 581,497 626,496 715,498 783,505 827,518 917,522 984,522 1007,508 1051,475 1096,450 1141,428 1208,395 1253,362 1295,340",
s:"330,607 401,577 491,557 581,543 670,528 760,525 827,515 917,513 984,512 1051,478 1119,465 1186,450 1253,438 1295,430",
b:"690,607 760,578 827,560 917,550 984,537 1051,518 1119,500 1208,480 1295,457",
bars:[670,668,675,675,680,692,695,695,690,690,695,690,690,690,697,703,708,723,727,738,752,762,773,786,797,810,810,812,813,815,812,808,810,813,820,822,820,822,825,825,825,817,792,752,722,712,695,678,678,680,685,678,675,678,680,685],
sig:"65,630 110,655 199,678 267,687 356,692 446,698 514,715 558,738 603,760 648,783 715,803 783,815 872,820 962,825 1007,820 1051,797 1096,770 1141,738 1186,705 1230,682 1298,677"});

chart({id:'c5',zx0:31,sx:2.8,zy0:150,x0:45,pitch:22.4,tx:52,price:514,order:388,frame:[40,1322,160,610,617,838],zero:782,dt:[43,401,760,1118],rt:[312,630,782],
c:"r505,528,540,555 r435,443,530,538 r395,403,443,445 g395,403,433,443 r370,390,435,455 r322,360,400,405 g338,347,457,565 g430,460,478,525 r445,472,475,498 g397,477,552,590 r510,520,553,585 r478,485,520,543 g478,483,493,510 g490,497,528,540 r500,505,533,535 r463,500,503,530 r390,407,500,503 r320,390,403,432 r238,253,390,390 g250,253,308,325 r240,240,308,365 g195,240,295,300 r237,258,296,355 g255,257,292,315 g290,293,333,405 r310,312,335,382 g305,310,360,382 g327,358,388,445 g390,395,436,460 r390,392,440,443 r330,350,378,395 g340,348,415,420 g400,415,465,505 r420,465,467,480 g460,462,517,537 g495,516,518,578 r445,452,517,518 r405,415,452,483 g365,413,452,455 r360,385,445,448 g382,383,453,455 r430,442,455,473 g395,440,497,505 r440,442,497,497 g430,443,460,493 g455,462,520,525 r432,480,520,563 r375,412,482,530 r363,395,412,445 g388,392,425,475 g408,425,513,518 r470,478,513,522 g445,480,535,537 r480,510,537,540 g500,510,512,540",
w:"42,605 88,510 133,440 155,405 200,410 222,428 245,470 267,497 312,505 357,510 402,490 446,420 469,360 491,318 514,295 536,270 558,280 603,300 648,355 693,375 738,390 760,410 783,415 805,435 827,480 850,485 872,475 895,460 917,440 939,428 962,430 984,452 1029,442 1074,482 1096,465 1119,450 1141,458 1163,480 1208,470 1230,495 1253,510",
y:"42,570 110,550 155,505 200,470 245,450 267,450 312,462 357,485 379,497 424,487 469,445 514,395 581,335 603,308 648,303 693,328 738,355 783,390 827,432 872,442 917,440 962,452 1029,455 1096,452 1141,452 1186,463 1230,468 1253,478",
m:"42,530 88,525 133,505 178,505 245,513 312,515 357,510 402,495 446,450 491,425 536,410 581,403 648,393 693,380 760,368 805,370 872,373 917,385 962,400 1007,418 1051,442 1096,447 1141,448 1186,460 1230,466 1253,468",
s:"42,607 88,590 133,575 200,560 267,525 312,513 379,497 446,487 514,475 581,452 693,442 760,430 850,428 917,415 1007,415 1096,425 1141,415 1208,415 1253,418",
b:"42,607 133,602 267,607 335,600 402,585 469,550 558,530 648,510 738,475 805,460 872,455 939,452 1007,450 1096,447 1186,447 1253,448",
bars:[775,750,727,715,695,675,683,692,708,725,733,737,743,748,752,758,745,720,695,675,660,640,640,645,650,650,660,678,700,705,715,728,750,765,785,803,803,800,800,793,795,795,800,802,805,815,817,805,800,800,802,805,818,820,825],
sig:"42,738 88,755 133,748 178,725 222,710 267,703 312,703 379,728 424,737 469,725 514,705 558,680 603,660 648,648 693,655 738,672 783,710 827,735 872,760 917,780 984,798 1051,802 1096,805 1186,805 1253,808"});

chart({id:'c6',zx0:42,sx:3,zy0:150,x0:56,pitch:24,tx:65,price:590,frame:[52,1423,160,610,617,838],zero:718,dt:[55,439,823,1207],rt:[308,503,718,810],
c:"r300,305,332,335 r285,292,305,310 r270,278,303,305 g268,272,280,288 r255,272,275,310 g258,272,280,290 r258,270,275,290 r258,265,273,275 g262,265,270,280 g250,270,275,285 r245,250,280,282 r240,244,260,262 r180,238,244,246 g232,238,244,258 g240,245,262,278 g255,262,268,275 g255,262,270,275 r235,237,265,285 g235,236,292,305 g285,295,297,315 g295,298,320,328 r275,278,320,322 r245,255,280,282 g250,254,265,268 g263,267,303,310 g300,305,310,355 g305,312,325,345 g318,327,340,345 g340,342,398,403 r350,350,398,400 g345,350,415,418 r395,397,415,430 g395,398,402,427 g395,405,420,467 g418,425,450,470 r435,450,452,472 g435,447,449,458 r435,445,448,450 r425,432,445,447 g428,432,498,515 r460,468,498,500 r442,455,468,488 r440,443,453,478 r420,422,440,450 g405,423,462,465 g450,463,475,490 g445,475,498,533 g490,498,515,533 g502,518,528,542 g527,530,555,595 r497,506,553,566 g505,507,517,545 r475,482,516,533 g447,483,547,548 g547,548,588,590",
w:"56,312 80,315 128,295 176,280 248,272 296,265 392,250 464,265 536,270 584,285 656,282 704,320 728,345 776,368 824,395 872,420 920,435 968,450 992,458 1064,458 1112,455 1160,470 1208,510 1256,520 1304,520 1350,530",
y:"56,310 128,295 224,283 296,270 392,255 512,260 584,270 680,285 776,320 824,345 872,380 944,418 992,435 1064,452 1112,453 1184,465 1256,490 1304,495 1350,525",
m:"56,350 104,327 200,315 272,290 344,278 440,278 512,268 632,270 728,285 824,310 920,345 1016,385 1112,415 1208,455 1304,470 1350,487",
s:"56,405 128,398 248,378 368,360 440,335 488,316 608,295 704,292 800,297 920,315 1040,330 1160,350 1256,375 1350,410",
b:"56,405 200,392 368,378 512,360 680,348 824,345 968,332 1112,340 1256,350 1350,365",
bars:[635,635,635,635,635,635,635,635,635,635,635,635,635,635,635,640,648,655,662,670,687,688,688,690,695,705,715,718,738,745,760,765,775,782,790,797,800,805,810,815,815,812,810,808,808,808,810,812,818,820,825,820,815,815,820],
sig:"56,633 200,633 370,635 490,645 560,660 632,675 680,685 776,715 824,738 872,755 944,780 1016,803 1064,812 1208,812 1352,815"});
</script>
</body>
</html>
